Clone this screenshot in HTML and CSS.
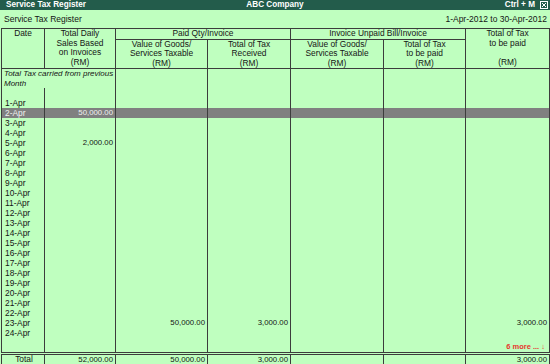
FILE: index.html
```html
<!DOCTYPE html>
<html lang="en">
<head>
  <meta charset="UTF-8" />
  <title>Service Tax Register</title>
  <link rel="stylesheet" href="styles.css">
</head>
<body>
  <div class="titlebar">
    <span class="tb-left">Service Tax Register</span>
    <span class="tb-mid">ABC Company</span>
    <span class="tb-right">Ctrl + M
      <svg class="close" width="8" height="8" viewBox="0 0 8 8">
        <rect x="0.5" y="0.5" width="7" height="7" fill="none" stroke="#fff" />
        <path d="M2 2 L6 6 M6 2 L2 6" stroke="#fff" stroke-width="1" />
      </svg>
    </span>
  </div>

  <div class="subtitle">
    <span>Service Tax Register</span>
    <span>1-Apr-2012 to 30-Apr-2012</span>
  </div>

  <table class="register">
    <colgroup>
      <col class="c-date">
      <col class="c-daily">
      <col class="c-val1">
      <col class="c-tax1">
      <col class="c-val2">
      <col class="c-tax2">
      <col class="c-total">
    </colgroup>
    <thead>
      <tr class="h1">
        <th rowspan="2">Date</th>
        <th rowspan="2">Total Daily<br>Sales Based<br>on Invoices<br>(RM)</th>
        <th colspan="2" class="grp">Paid Qty/Invoice</th>
        <th colspan="2" class="grp">Invoice Unpaid Bill/Invoice</th>
        <th rowspan="2">Total of Tax<br>to be paid<br><br>(RM)</th>
      </tr>
      <tr class="h2">
        <th>Value of Goods/<br>Services Taxable<br>(RM)</th>
        <th>Total of Tax<br>Received<br>(RM)</th>
        <th>Value of Goods/<br>Services Taxable<br>(RM)</th>
        <th>Total of Tax<br>to be paid<br>(RM)</th>
      </tr>
    </thead>
    <tbody>
      <tr class="carried">
        <td colspan="2" class="note">Total Tax carried from previous<br>Month</td>
        <td></td><td></td><td></td><td></td><td></td>
      </tr>
      <tr><td></td><td></td><td></td><td></td><td></td><td></td><td></td></tr>
      <tr><td>1-Apr</td><td></td><td></td><td></td><td></td><td></td><td></td></tr>
      <tr class="sel"><td>2-Apr</td><td class="num">50,000.00</td><td></td><td></td><td></td><td></td><td></td></tr>
      <tr><td>3-Apr</td><td></td><td></td><td></td><td></td><td></td><td></td></tr>
      <tr><td>4-Apr</td><td></td><td></td><td></td><td></td><td></td><td></td></tr>
      <tr><td>5-Apr</td><td class="num">2,000.00</td><td></td><td></td><td></td><td></td><td></td></tr>
      <tr><td>6-Apr</td><td></td><td></td><td></td><td></td><td></td><td></td></tr>
      <tr><td>7-Apr</td><td></td><td></td><td></td><td></td><td></td><td></td></tr>
      <tr><td>8-Apr</td><td></td><td></td><td></td><td></td><td></td><td></td></tr>
      <tr><td>9-Apr</td><td></td><td></td><td></td><td></td><td></td><td></td></tr>
      <tr><td>10-Apr</td><td></td><td></td><td></td><td></td><td></td><td></td></tr>
      <tr><td>11-Apr</td><td></td><td></td><td></td><td></td><td></td><td></td></tr>
      <tr><td>12-Apr</td><td></td><td></td><td></td><td></td><td></td><td></td></tr>
      <tr><td>13-Apr</td><td></td><td></td><td></td><td></td><td></td><td></td></tr>
      <tr><td>14-Apr</td><td></td><td></td><td></td><td></td><td></td><td></td></tr>
      <tr><td>15-Apr</td><td></td><td></td><td></td><td></td><td></td><td></td></tr>
      <tr><td>16-Apr</td><td></td><td></td><td></td><td></td><td></td><td></td></tr>
      <tr><td>17-Apr</td><td></td><td></td><td></td><td></td><td></td><td></td></tr>
      <tr><td>18-Apr</td><td></td><td></td><td></td><td></td><td></td><td></td></tr>
      <tr><td>19-Apr</td><td></td><td></td><td></td><td></td><td></td><td></td></tr>
      <tr><td>20-Apr</td><td></td><td></td><td></td><td></td><td></td><td></td></tr>
      <tr><td>21-Apr</td><td></td><td></td><td></td><td></td><td></td><td></td></tr>
      <tr><td>22-Apr</td><td></td><td></td><td></td><td></td><td></td><td></td></tr>
      <tr><td>23-Apr</td><td></td><td class="num">50,000.00</td><td class="num">3,000.00</td><td></td><td></td><td class="num">3,000.00</td></tr>
      <tr><td>24-Apr</td><td></td><td></td><td></td><td></td><td></td><td></td></tr>
      <tr class="filler"><td></td><td></td><td></td><td></td><td></td><td></td><td class="more">6 more ... &darr;</td></tr>
    </tbody>
    <tfoot>
      <tr class="total">
        <td class="center">Total</td>
        <td class="num">52,000.00</td>
        <td class="num">50,000.00</td>
        <td class="num">3,000.00</td>
        <td></td>
        <td></td>
        <td class="num">3,000.00</td>
      </tr>
    </tfoot>
  </table>
</body>
</html>
```

FILE: styles.css
```css
* {
  margin: 0;
  padding: 0;
  box-sizing: border-box;
}

body {
  background: #bfffbf;
  font-family: 'Liberation Sans', Arial, sans-serif;
  font-size: 8.4px;
  color: #151515;
  width: 550px;
  height: 364px;
  overflow: hidden;
}

.titlebar {
  height: 10px;
  background: #235c4b;
  color: #fff;
  font-weight: bold;
  font-size: 8.2px;
  line-height: 10px;
  display: flex;
  justify-content: space-between;
  align-items: center;
  padding: 0 2px 0 6px;
  position: relative;
}

.tb-mid {
  position: absolute;
  left: 0;
  right: 0;
  text-align: center;
  pointer-events: none;
}

.tb-right {
  display: flex;
  align-items: center;
  gap: 5px;
}

.close {
  display: block;
}

.subtitle {
  height: 18px;
  display: flex;
  justify-content: space-between;
  align-items: center;
  padding: 0 3px 0 4px;
  font-size: 8.5px;
}

.register {
  margin-left: 1px;
  width: 548px;
  border-collapse: collapse;
  table-layout: fixed;
  border: 1px solid #3c3c3c;
}

.c-date { width: 43px; }
.c-daily { width: 71px; }
.c-val1 { width: 92px; }
.c-tax1 { width: 83px; }
.c-val2 { width: 93px; }
.c-tax2 { width: 82px; }
.c-total { width: 84px; }

.register th {
  font-weight: normal;
  text-align: center;
  vertical-align: top;
  line-height: 9.5px;
  border: 1px solid #3c3c3c;
  padding: 0;
  white-space: nowrap;
}

.register .h1 th {
  height: 9px;
}

.register .h2 th {
  height: 28px;
}

.register td {
  height: 10px;
  line-height: 10px;
  padding: 0 1px 0 3px;
  border-left: 1px solid #3c3c3c;
  border-right: 1px solid #3c3c3c;
  white-space: nowrap;
  vertical-align: middle;
}

.register .num {
  text-align: right;
  font-size: 7.8px;
  padding-right: 2px;
}

.register .note {
  font-style: italic;
  font-size: 8px;
  vertical-align: top;
  padding-left: 2px;
  height: 19px;
  line-height: 9.5px;
}

.register .sel td {
  background: #808080;
  color: #f0f0f0;
}

.register .filler td {
  height: 15px;
  vertical-align: bottom;
}

.register .more {
  text-align: right;
  color: #e8372c;
  font-weight: bold;
  font-size: 7.5px;
  padding-right: 4px;
}

.register .total td {
  border-top: 3px double #3c3c3c;
  height: 9px;
  line-height: 9px;
}

.register .center {
  text-align: center;
}
```
